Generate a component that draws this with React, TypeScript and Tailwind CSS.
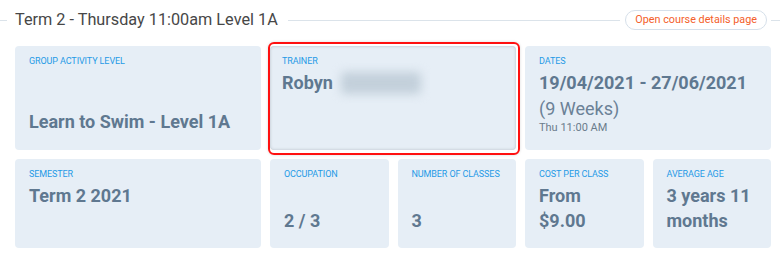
import React from "react";

const font = { fontFamily: "Roboto, 'Liberation Sans', sans-serif" };

function Label({ children }: { children: React.ReactNode }) {
  return (
    <div className="text-[9px] leading-[12px] uppercase text-[#1f9ae6] tracking-[-0.1px]">
      {children}
    </div>
  );
}

function Value({ children, className = "" }: { children: React.ReactNode; className?: string }) {
  return (
    <div className={"text-[18px] leading-[25px] font-bold text-[#5f7890] " + className}>{children}</div>
  );
}

export default function App() {
  return (
    <div className="w-[780px] h-[261px] bg-white overflow-hidden" style={font}>
      <div className="flex items-center h-[20px] mt-[10px]">
        <div className="w-[7px] h-px bg-[#dbe3ea]" />
        <div className="ml-[8px] text-[16.25px] leading-[20px] text-[#474747] whitespace-nowrap">
          Term 2 - Thursday 11:00am Level 1A
        </div>
        <div className="flex-1 h-px bg-[#dbe3ea] ml-[10px] mr-[5px]" />
        <button className="h-[20px] px-[9px] rounded-full border border-[#d6e0ea] text-[10.8px] leading-[18px] text-[#f4602a] whitespace-nowrap">
          Open course details page
        </button>
        <div className="w-[9px] h-px bg-[#dbe3ea] ml-[4px]" />
      </div>

      <div className="grid grid-cols-6 gap-[9px] ml-[15px] mr-[9px] mt-[16px] grid-rows-[104px_89px]">
        <div className="col-span-2 bg-[#e6eef6] rounded-[4px] pt-[9px] px-[14px] pb-[16px] flex flex-col">
          <Label>Group activity level</Label>
          <Value className="mt-auto">Learn to Swim - Level 1A</Value>
        </div>

        <div className="col-span-2 relative">
          <div className="h-full bg-[#e6eef6] rounded-[4px] pt-[9px] px-[12px] flex flex-col shadow-[inset_0_0_3px_rgba(120,130,140,0.45)]">
            <Label>Trainer</Label>
            <div className="flex items-center mt-[3px]">
              <Value>Robyn</Value>
              <div className="ml-[8px] w-[80px] h-[22px] bg-[#c3d0db] blur-[5px] rounded-[4px]" />
            </div>
          </div>
          <div className="absolute top-[-4px] bottom-[-5px] left-[-2px] right-[-4px] border-2 border-[#ff1010] rounded-[6px] pointer-events-none shadow-[0_0_3px_rgba(0,0,0,0.15)]" />
        </div>

        <div className="col-span-2 bg-[#e6eef6] rounded-[4px] pt-[9px] px-[14px] flex flex-col">
          <Label>Dates</Label>
          <Value className="mt-[3px]">19/04/2021 - 27/06/2021</Value>
          <div className="text-[18px] leading-[25px] text-[#6b8196] mt-[1px]">(9 Weeks)</div>
          <div className="text-[11px] leading-[13px] text-[#6b7c8c]">Thu 11:00 AM</div>
        </div>

        <div className="col-span-2 bg-[#e6eef6] rounded-[4px] pt-[9px] px-[14px] flex flex-col">
          <Label>Semester</Label>
          <Value className="mt-[3px]">Term 2 2021</Value>
        </div>

        <div className="bg-[#e6eef6] rounded-[4px] pt-[9px] px-[14px] flex flex-col">
          <Label>Occupation</Label>
          <Value className="mt-[28px]">2 / 3</Value>
        </div>

        <div className="bg-[#e6eef6] rounded-[4px] pt-[9px] px-[14px] flex flex-col">
          <Label>Number of classes</Label>
          <Value className="mt-[28px]">3</Value>
        </div>

        <div className="bg-[#e6eef6] rounded-[4px] pt-[9px] px-[14px] flex flex-col">
          <Label>Cost per class</Label>
          <Value className="mt-[3px]">
            From
            <br />
            $9.00
          </Value>
        </div>

        <div className="bg-[#e6eef6] rounded-[4px] pt-[9px] px-[14px] flex flex-col">
          <Label>Average age</Label>
          <Value className="mt-[3px]">
            3 years 11
            <br />
            months
          </Value>
        </div>
      </div>
    </div>
  );
}
